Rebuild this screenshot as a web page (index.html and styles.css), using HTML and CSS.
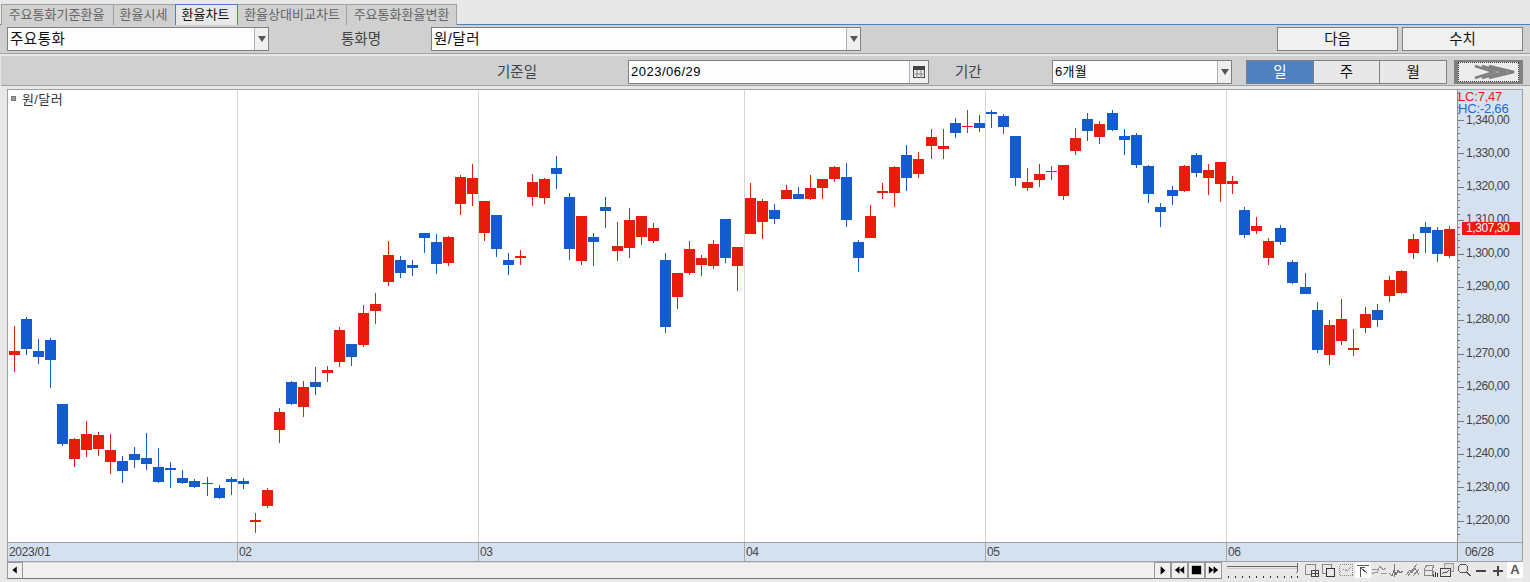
FILE: index.html
```html
<!DOCTYPE html>
<html lang="ko">
<head>
<meta charset="utf-8">
<title>환율차트</title>
<link rel="stylesheet" href="styles.css">
</head>
<body>
<nav class="tabs">
  <div class="tab t1">주요통화기준환율</div>
  <div class="tab t2">환율시세</div>
  <div class="tab t3 on">환율차트</div>
  <div class="tab t4">환율상대비교차트</div>
  <div class="tab t5">주요통화환율변환</div>
</nav>

<section class="row row1">
  <div class="field f1"><span class="val">주요통화</span><i class="drop"></i></div>
  <div class="lbl l1">통화명</div>
  <div class="field f2"><span class="val">원/달러</span><i class="drop"></i></div>
  <div class="btns">
    <div class="btn">다음</div>
    <div class="btn">수치</div>
  </div>
</section>

<section class="row row2">
  <div class="lbl l2">기준일</div>
  <div class="field f3"><span class="val num">2023/06/29</span>
    <i class="cal"><svg width="12" height="12" viewBox="0 0 12 12"><rect x="0.5" y="0.5" width="11" height="11" fill="#e8e8e8" stroke="#444"/><rect x="0" y="0" width="12" height="4" fill="#444"/><path d="M4 4v8M8 4v8M0 8h12" stroke="#888"/></svg></i>
  </div>
  <div class="lbl l3">기간</div>
  <div class="field f4"><span class="val sm">6개월</span><i class="drop"></i></div>
  <div class="seg">
    <div class="sg on">일</div>
    <div class="sg">주</div>
    <div class="sg">월</div>
  </div>
  <div class="go">
    <div class="go-in">
      <svg width="42" height="16" viewBox="0 0 42 16"><g fill="none" stroke="#808080" stroke-width="2.500"><path d="M1 2l19 6-19 6"/><path d="M8 2l22 6-22 6"/><path d="M15 2l25 6-25 6"/></g></svg>
    </div>
  </div>
</section>

<main class="frame">
  <div class="top">
    <div class="plot">
      <svg id="chart" class="cv" width="1449" height="452" viewBox="8 90 1449 452">
        <path class="grid" d="M237.5 90v452M478.5 90v452M744.5 90v452M985.5 90v452M1226.5 90v452"/>
        <g id="candles"></g>
      </svg>
      <div class="legend"><i class="sq"></i><span>원/달러</span></div>
    </div>
    <div class="axis">
      <svg class="cv" width="64" height="452" viewBox="1458 90 64 452">
        <path class="tick major" d="M1461 120V540"/>
        <path class="tick minor" d="M1459 93.3V540"/>
        <g class="yl">
          <text x="1466" y="119.500">1,340,00</text>
          <text x="1466" y="153">1,330,00</text>
          <text x="1466" y="186">1,320,00</text>
          <text x="1466" y="219">1,310,00</text>
          <text x="1466" y="253">1,300,00</text>
          <text x="1466" y="286">1,290,00</text>
          <text x="1466" y="319">1,280,00</text>
          <text x="1466" y="353">1,270,00</text>
          <text x="1466" y="386">1,260,00</text>
          <text x="1466" y="420">1,250,00</text>
          <text x="1466" y="453">1,240,00</text>
          <text x="1466" y="487">1,230,00</text>
          <text x="1466" y="520">1,220,00</text>
        </g>
      </svg>
      <div class="stat"><div class="lc">LC:7,47</div><div class="hc">HC:-2,66</div></div>
      <div class="tag">1,307,30</div>
    </div>
  </div>
  <div class="band">
    <div class="m">2023/01</div>
    <div class="m">02</div>
    <div class="m">03</div>
    <div class="m">04</div>
    <div class="m">05</div>
    <div class="m">06</div>
    <div class="m last">06/28</div>
  </div>
</main>

<footer class="bar">
  <div class="sb sb-l"><svg width="16" height="15" viewBox="0 0 16 15"><path d="M10 3v8L5 7z" fill="#000"/></svg></div>
  <div class="track"></div>
  <div class="sb"><svg width="16" height="15" viewBox="0 0 16 15"><path d="M6 3l5 4.500-5 4.500z" fill="#000"/></svg></div>
  <div class="sb"><svg width="16" height="15" viewBox="0 0 16 15"><path d="M8 3v8L3 7zM13 3v8L8 7z" fill="#000"/></svg></div>
  <div class="sb"><svg width="16" height="15" viewBox="0 0 16 15"><rect x="3" y="2.500" width="10" height="9" fill="#000"/></svg></div>
  <div class="sb"><svg width="16" height="15" viewBox="0 0 16 15"><path d="M3 3l5 4v-4l5 4-5 4v-4l-5 4z" fill="#000"/></svg></div>
  <svg class="slider" width="79" height="16" viewBox="0 0 79 16">
    <path d="M2 4.500h70" stroke="#666" fill="none"/><path d="M2 6.500h70" stroke="#ccc" fill="none"/>
    <path d="M72.500 1v8l-1 2" stroke="#666" fill="none"/>
    <path d="M3.500 14v2M10.500 14v2M17.500 14v2M24.500 14v2M31.500 14v2M38.500 14v2M45.500 14v2M52.500 14v2M59.500 14v2M66.500 14v2M72.500 14v2" stroke="#333" fill="none"/>
  </svg>
  <svg class="ic" width="17" height="16" viewBox="0 0 17 16"><rect x="1.500" y="2.500" width="10" height="10" rx="1.500" stroke="#888"/><rect x="7.500" y="8.500" width="7" height="6" fill="#e8e8e8" stroke="#444"/><path d="M11 8.500v6M7.500 11.500h7" stroke="#444"/></svg>
  <svg class="ic" width="17" height="16" viewBox="0 0 17 16"><rect x="1.500" y="2.500" width="9" height="9" stroke="#888"/><rect x="5.500" y="6.500" width="8" height="8" fill="#e8e8e8" stroke="#333"/></svg>
  <svg class="ic" width="17" height="16" viewBox="0 0 17 16"><rect x="1.500" y="2.500" width="13" height="11" stroke="#888" stroke-dasharray="1 1"/><path d="M2 10l4-3 3 2 5-5" stroke="#999" stroke-dasharray="2 1"/></svg>
  <svg class="ic w" width="16" height="16" viewBox="0 0 16 16"><path d="M2 3.500h12M5 5v10M5.500 5.500l7 6M5.500 5.500h4M5.500 5.500v4" stroke="#555"/></svg>
  <svg class="ic" width="17" height="16" viewBox="0 0 17 16"><path d="M1 12l3-2 2 1 3-7 3 4 3-2M1 7h6M10 11h6" stroke="#999"/></svg>
  <svg class="ic" width="17" height="16" viewBox="0 0 17 16"><path d="M1 11l3 3 2-6 2 5 2-5 2 3 3-2M6 2v13" stroke="#777"/></svg>
  <svg class="ic" width="17" height="16" viewBox="0 0 17 16"><path d="M1 13l4-5 2 3 3-5 4 7M3 14L12 2M8 14l6-7" stroke="#888"/></svg>
  <svg class="ic" width="17" height="16" viewBox="0 0 17 16"><path d="M2 8l3-5h7l-2 5H2v5h8V8M10 13l2-4" stroke="#888"/><path d="M11.500 15v-3M13.500 15v-5M15.500 15v-4" stroke="#333"/></svg>
  <svg class="ic" width="17" height="16" viewBox="0 0 17 16"><rect x="5.500" y="1.500" width="9" height="8" stroke="#999" fill="#ddd"/><rect x="1.500" y="6.500" width="10" height="8" fill="#e8e8e8" stroke="#444"/><path d="M3 12l2-2 2 1 3-3" stroke="#444"/></svg>
  <svg class="ic" width="17" height="16" viewBox="0 0 17 16"><circle cx="7" cy="6.500" r="4.500" stroke="#555"/><path d="M10.500 10l4 4" stroke="#555" stroke-width="1.500"/></svg>
  <svg class="ic" width="17" height="16" viewBox="0 0 17 16"><path d="M3 9h10" stroke="#444" stroke-width="2"/></svg>
  <svg class="ic" width="16" height="16" viewBox="0 0 16 16"><path d="M3 9h10M8 4v10" stroke="#444" stroke-width="2"/></svg>
  <div class="aa">A</div>
</footer>
<script src="chart.js"></script>
</body>
</html>
```
FILE: styles.css
```css
* { box-sizing: border-box; }
html, body { margin: 0; padding: 0; }
body {
  width: 1530px; height: 582px; overflow: hidden;
  background: #e8e8e8;
  font-family: "Liberation Sans", "Noto Sans CJK KR", sans-serif;
  color: #222;
}
.tabs {
  height: 25px; padding: 4px 0 0 1px;
  display: flex; align-items: stretch;
  border-bottom: 1px solid #4a80c8;
}
.tab {
  height: 21px; background: #d0d0d0;
  border: 1px solid #a0a0a0; border-bottom: 0; border-left: 0;
  font-size: 13px; line-height: 19px; color: #666; text-align: center;
}
.t1 { width: 113px; border-left: 1px solid #a0a0a0; padding-right: 2px; }
.t2 { width: 62px; padding-right: 2px; }
.t3 { width: 63px; }
.t4 { width: 109px; }
.t5 { width: 110px; }
.tab.on {
  background: #e8e8e8; color: #111;
  border: 1px solid #4a80c8; border-bottom: 0;
  width: 63px; margin-left: -1px; padding-right: 2px;
}
.row { display: flex; align-items: flex-start; background: #d0d0d0; }
.row1 { height: 29px; padding: 2px 7px 0; border-bottom: 1px solid #a0a0a0; }
.row2 { height: 30px; margin: 2px 0 0 1px; padding-top: 4px; border-bottom: 1px solid #a0a0a0; }
.field {
  height: 24px; border: 1px solid #808080; background: #fdfdff;
  display: flex; align-items: center; justify-content: space-between;
}
.val { padding-left: 2px; font-size: 14.5px; line-height: 22px; color: #111; letter-spacing: .5px; white-space: nowrap; }
.val.num { font-size: 13px; letter-spacing: .5px; color: #000; }
.val.sm { font-size: 13px; letter-spacing: .3px; color: #000; }
.f1 { width: 262px; }
.f2 { width: 430px; margin-left: 49px; }
.f3 { width: 301px; margin-left: 91px; }
.f4 { width: 180px; margin-left: 70px; }
.drop {
  width: 14px; height: 22px; background: #efefef; border-left: 1px solid #b0b0b0;
  display: flex; align-items: center; justify-content: center;
}
.drop::after {
  content: ""; width: 0; height: 0;
  border-left: 4px solid transparent; border-right: 4px solid transparent; border-top: 6px solid #555;
}
.cal {
  width: 19px; height: 22px; background: #efefef; border-left: 1px solid #b0b0b0;
  display: flex; align-items: center; justify-content: center;
}
.cal svg { display: block; }
.lbl { font-size: 14.5px; line-height: 24px; color: #444; letter-spacing: 0; white-space: nowrap; }
.l1 { margin-left: 72px; width: 41px; }
.l2 { margin-left: 496px; width: 40px; }
.l3 { margin-left: 26px; width: 27px; }
.btns { margin-left: auto; display: flex; gap: 4px; }
.btn {
  width: 121px; height: 24px; background: #f0f0f0; border: 1px solid #808080;
  font-size: 14.5px; line-height: 22px; text-align: center; color: #111;
}
.seg { margin-left: 14px; width: 201px; height: 24px; display: flex; border: 1px solid #808080; background: #e8e8e8; }
.sg { flex: 1; font-size: 14.5px; line-height: 22px; text-align: center; color: #111; border-left: 1px solid #808080; }
.sg:first-child { border-left: 0; }
.sg.on { background: #4f81c1; color: #fff; }
.go {
  margin-left: 7px; width: 69px; height: 24px; background: #ececec;
  border: 1px solid #808080; border-width: 2px 4px; padding: 0;
}
.go-in {
  height: 100%; border: 1px dotted #333; display: flex; align-items: center; justify-content: center;
  padding-left: 12px;
}
.go-in svg { display: block; }
.frame {
  margin: 3px 0 0 7px; width: 1516px; height: 473px;
  border: 1px solid #a0a0a0; background: #fff;
}
.top { display: flex; height: 452px; }
.plot { position: relative; width: 1449px; height: 452px; background: #fff; }
.cv { display: block; shape-rendering: crispEdges; }
.grid { fill: none; stroke: #d4d4d4; }
.legend { position: absolute; left: 3px; top: 0; display: flex; align-items: center; height: 16px; }
.sq { width: 5px; height: 5px; background: #999; border: 1px solid #777; margin-right: 6px; }
.legend span { font-size: 13px; color: #333; letter-spacing: .4px; white-space: nowrap; }
.axis { position: relative; width: 65px; height: 452px; background: #d6e1ef; border-left: 1px solid #909090; }
.tick { fill: none; stroke: #777; }
.major { stroke-width: 6; stroke-dasharray: 1 32.4; }
.minor { stroke-width: 2; stroke-dasharray: 1 5.68; }
.yl text { font-size: 12px; fill: #444; letter-spacing: -.42px; dominant-baseline: central; shape-rendering: auto; }
.stat { position: absolute; left: 0; top: 1px; font-size: 13px; line-height: 12px; letter-spacing: -.2px; }
.lc { color: #e81c0a; }
.hc { color: #1a6ae0; }
.tag {
  position: absolute; left: 4px; top: 132px; width: 58px; height: 13px;
  background: #e81c0a; color: #fff; font-size: 12px; line-height: 13px; letter-spacing: -.42px;
  padding-left: 4px;
}
.band {
  height: 19px; background: #d6e1ef; border-top: 1px solid #a0a0a0;
  display: grid; grid-template-columns: 229px 241px 266px 241px 241px 231px 1fr;
}
.m { font-size: 12px; line-height: 18px; color: #444; padding-left: 1px; letter-spacing: -.3px; border-left: 1px solid #a8a8a8; white-space: nowrap; }
.m:first-child { border-left: 0; }
.m.last { padding-left: 7px; border-left: 1px solid #909090; }
.bar { display: flex; height: 17px; margin: 0 0 0 7px; width: 1516px; }
.sb {
  width: 17px; height: 17px; background: #f0f0f0; border: 1px solid #999; border-bottom: 1px solid #777;
  display: flex; align-items: center; justify-content: center;
}
.sb svg { display: block; }
.sb-l { width: 16px; }
.track { flex: 1; background: #f0f0f0; border-bottom: 1px solid #777; border-top: 1px solid #d8d8d8; }
.slider { margin-left: 3px; display: block; shape-rendering: crispEdges; }
.ic { display: block; fill: none; shape-rendering: crispEdges; }
.ic.w { background: #fff; }
.aa { width: 16px; height: 16px; margin-left: 1px; background: #fff; font-size: 13px; font-weight: bold; line-height: 16px; text-align: center; color: #555; }
```
FILE: chart.js
```js
// x, high, low, bodyTop, bodyBottom, colour (r = up, b = down)
var data = [
[14,326,372,351,355,'r'],[26,317,355,319,349,'b'],[38,339,364,351,357,'b'],[50,338,388,340,360,'b'],
[62,404,446,404,444,'b'],[74,438,467,439,459,'r'],[86,421,457,434,450,'r'],[98,432,456,435,449,'r'],
[110,434,474,450,462,'r'],[122,456,483,461,471,'b'],[134,447,468,454,460,'b'],[146,433,470,458,464,'b'],
[158,448,483,467,482,'b'],[170,462,488,468,470,'b'],[182,470,484,478,483,'b'],[194,479,488,481,487,'b'],
[207,477,496,483,484,'b'],[219,485,499,488,498,'b'],[231,477,495,479,482,'b'],[243,478,489,481,484,'b'],
[255,513,533,520,522,'r'],[267,488,508,490,506,'r'],[279,408,443,412,430,'r'],[291,381,405,382,404,'b'],
[303,381,417,387,407,'r'],[315,367,395,382,387,'b'],[327,366,382,370,373,'r'],[339,327,367,330,362,'r'],
[351,344,366,344,357,'b'],[363,305,347,313,345,'r'],[375,293,324,304,311,'r'],[388,241,286,255,282,'r'],
[400,256,278,260,273,'b'],[412,260,276,265,268,'b'],[424,233,253,233,238,'b'],[436,234,274,242,264,'b'],
[448,236,266,237,263,'r'],[460,175,215,177,204,'r'],[472,164,206,178,194,'r'],[484,201,241,201,233,'r'],
[496,215,257,215,249,'b'],[508,253,275,260,265,'b'],[520,250,265,256,258,'r'],[532,174,206,182,197,'r'],
[544,178,204,179,198,'r'],[556,156,189,168,174,'b'],[569,193,260,197,249,'b'],[581,216,265,216,261,'r'],
[593,233,266,237,242,'b'],[605,197,228,207,211,'b'],[617,222,261,246,251,'r'],[629,208,258,220,248,'r'],
[641,216,245,216,237,'r'],[653,223,243,228,241,'r'],[665,253,333,260,327,'b'],[677,273,309,273,297,'r'],
[689,241,275,249,273,'r'],[701,255,276,258,265,'r'],[713,240,269,244,266,'r'],[725,219,263,219,258,'b'],
[737,247,291,247,266,'r'],[750,183,234,198,234,'r'],[762,199,239,201,222,'r'],[774,204,224,210,219,'b'],
[786,185,199,190,199,'r'],[798,187,199,194,199,'b'],[810,175,200,188,199,'r'],[822,179,199,179,188,'r'],
[834,166,182,167,179,'r'],[846,163,227,177,220,'b'],[858,240,272,242,258,'b'],[870,205,238,216,238,'r'],
[882,183,199,191,193,'r'],[894,166,207,167,193,'r'],[906,145,191,155,178,'b'],[918,152,178,159,174,'r'],
[931,129,159,137,146,'r'],[943,129,159,146,149,'r'],[955,118,138,123,133,'b'],[967,110,133,126,127,'r'],
[979,115,132,123,128,'b'],[991,110,128,112,114,'b'],[1003,114,134,116,127,'b'],[1015,136,186,136,178,'b'],
[1027,168,191,182,188,'r'],[1039,164,187,174,180,'r'],[1051,166,180,171,172,'r'],[1063,165,200,165,196,'r'],
[1075,128,155,138,151,'r'],[1087,113,141,119,131,'b'],[1099,121,144,124,137,'r'],[1112,110,131,113,130,'b'],
[1124,129,155,136,140,'b'],[1136,133,168,135,165,'b'],[1148,165,203,166,194,'b'],[1160,203,227,207,212,'b'],
[1172,186,205,190,196,'b'],[1184,165,192,166,191,'r'],[1196,153,177,155,173,'b'],[1208,164,195,170,178,'r'],
[1220,162,202,162,184,'r'],[1232,176,194,181,184,'r'],[1244,207,238,210,235,'b'],[1256,217,234,226,231,'r'],
[1268,238,265,241,258,'r'],[1280,225,245,228,242,'b'],[1292,260,284,262,283,'b'],[1305,273,294,287,294,'b'],
[1317,302,353,310,350,'b'],[1329,320,365,325,355,'r'],[1341,299,345,319,341,'r'],[1353,329,356,348,350,'r'],
[1365,307,333,314,328,'r'],[1377,304,327,310,320,'b'],[1389,276,302,280,296,'r'],[1401,270,294,271,293,'r'],
[1413,234,259,239,253,'r'],[1425,222,253,227,233,'b'],[1437,227,262,230,254,'b'],[1449,226,258,229,256,'r']
];
var NS = 'http://www.w3.org/2000/svg';
var g = document.getElementById('candles');
function rect(x, y, w, h, fill) {
  var r = document.createElementNS(NS, 'rect');
  r.setAttribute('x', x); r.setAttribute('y', y);
  r.setAttribute('width', w); r.setAttribute('height', h);
  r.setAttribute('fill', fill);
  g.appendChild(r);
}
data.forEach(function (c) {
  var col = c[5] === 'r' ? '#e81c0a' : '#125ccd';
  rect(c[0], c[1], 1, c[2] - c[1], col);
  rect(c[0] - 5, c[3], 11, c[4] - c[3], col);
});
```
